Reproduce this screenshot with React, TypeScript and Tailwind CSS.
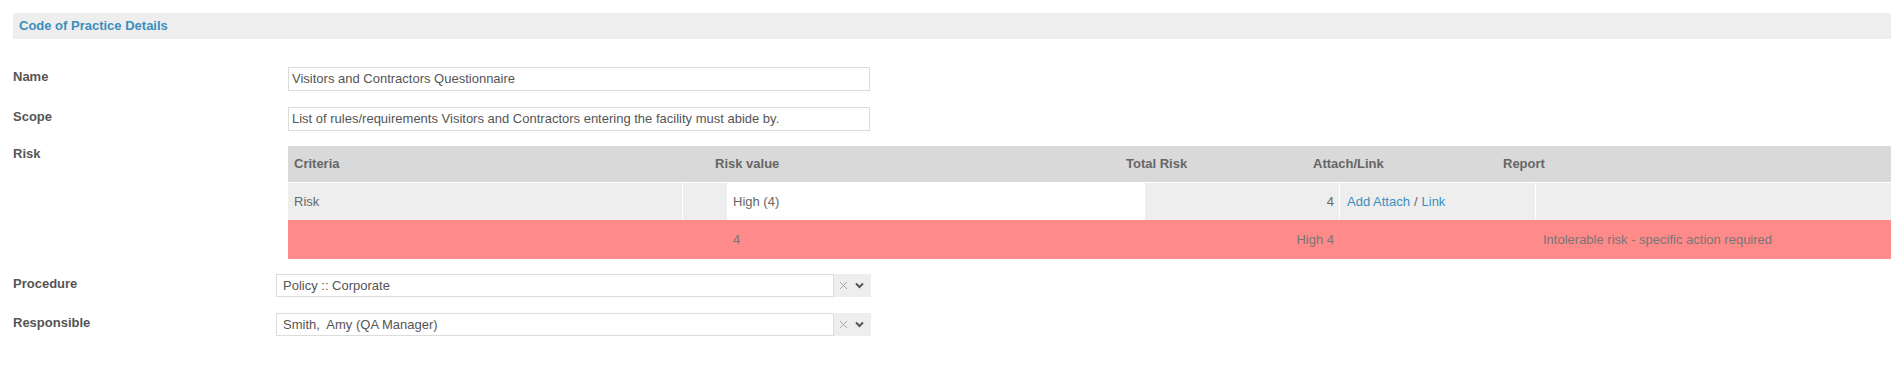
import type { ReactNode } from 'react'

const font = "font-['Liberation_Sans',Arial,sans-serif]"

function Label({ children, className = '' }: { children: ReactNode; className?: string }) {
  return <div className={`shrink-0 text-[13px] font-bold text-[#555] ${className}`}>{children}</div>
}

function TextBox({ value }: { value: string }) {
  return (
    <div className="flex h-[24px] w-[582px] items-center border border-[#dcdcdc] bg-white pl-[3px] text-[13px] text-[#555]">
      {value}
    </div>
  )
}

function SelectBox({ value }: { value: string }) {
  return (
    <div className="flex h-[23px]">
      <div className="flex w-[558px] items-center whitespace-pre border border-[#dcdcdc] bg-white pl-[6px] text-[13px] text-[#555]">
        {value}
      </div>
      <div className="flex w-[37px] items-center gap-[7px] bg-[#eeeeee] pl-[5px]">
        <svg width="9" height="9" viewBox="0 0 9 9">
          <path d="M1 1 L8 8 M8 1 L1 8" stroke="#aaa" strokeWidth="1" />
        </svg>
        <svg width="9" height="7" viewBox="0 0 9 7">
          <path d="M1 1.5 L4.5 5 L8 1.5" stroke="#555" strokeWidth="2" fill="none" />
        </svg>
      </div>
    </div>
  )
}

export default function App() {
  return (
    <div className={`${font} h-[367px] overflow-hidden bg-white pl-[13px] pt-[13px]`}>
      {/* section title */}
      <div className="flex h-[26px] items-center bg-[#eeeeee] pl-[6px] text-[13px] font-bold text-[#3b8ebd]">
        Code of Practice Details
      </div>

      <div className="mt-[28px] flex items-center">
        <Label className="mb-[4px] w-[275px]">Name</Label>
        <TextBox value="Visitors and Contractors Questionnaire" />
      </div>

      <div className="mt-[16px] flex items-center">
        <Label className="mb-[4px] w-[275px]">Scope</Label>
        <TextBox value="List of rules/requirements Visitors and Contractors entering the facility must abide by." />
      </div>

      <div className="mt-[15px] flex items-start">
        <Label className="-mt-[2px] w-[275px]">Risk</Label>
        <div className="flex-1 text-[13px] text-[#666]">
          <div className="flex h-[36px] items-center bg-[#d9d9d9] font-bold">
            <span className="w-[427px] pl-[6px]">Criteria</span>
            <span className="w-[411px]">Risk value</span>
            <span className="w-[187px]">Total Risk</span>
            <span className="w-[190px]">Attach/Link</span>
            <span className="flex-1">Report</span>
          </div>
          <div className="mt-px flex h-[37px] items-stretch bg-white">
            <div className="flex w-[394px] items-center bg-[#eeeeee] pl-[6px]">Risk</div>
            <div className="ml-px w-[44px] bg-[#eeeeee]" />
            <div className="flex w-[418px] items-center pl-[6px]">High (4)</div>
            <div className="flex w-[194px] items-center justify-end bg-[#eeeeee] pr-[5px]">4</div>
            <div className="ml-px flex w-[195px] items-center bg-[#eeeeee] pl-[7px] text-[#3b8ebd]">
              <span>Add Attach</span>
              <span className="px-[4px] text-[#666]">/</span>
              <span>Link</span>
            </div>
            <div className="ml-px flex-1 bg-[#eeeeee]" />
          </div>
          <div className="flex h-[39px] items-center bg-[#ff8a8a] text-[#777]">
            <span className="w-[439px]" />
            <span className="w-[418px] pl-[6px]">4</span>
            <span className="w-[194px] pr-[5px] text-right">High 4</span>
            <span className="w-[197px]" />
            <span className="pl-[7px]">Intolerable risk - specific action required</span>
          </div>
        </div>
      </div>

      <div className="mt-[15px] flex items-center">
        <Label className="mb-[3px] w-[263px]">Procedure</Label>
        <SelectBox value="Policy :: Corporate" />
      </div>

      <div className="mt-[16px] flex items-center">
        <Label className="mb-[3px] w-[263px]">Responsible</Label>
        <SelectBox value="Smith,  Amy (QA Manager)" />
      </div>
    </div>
  )
}
